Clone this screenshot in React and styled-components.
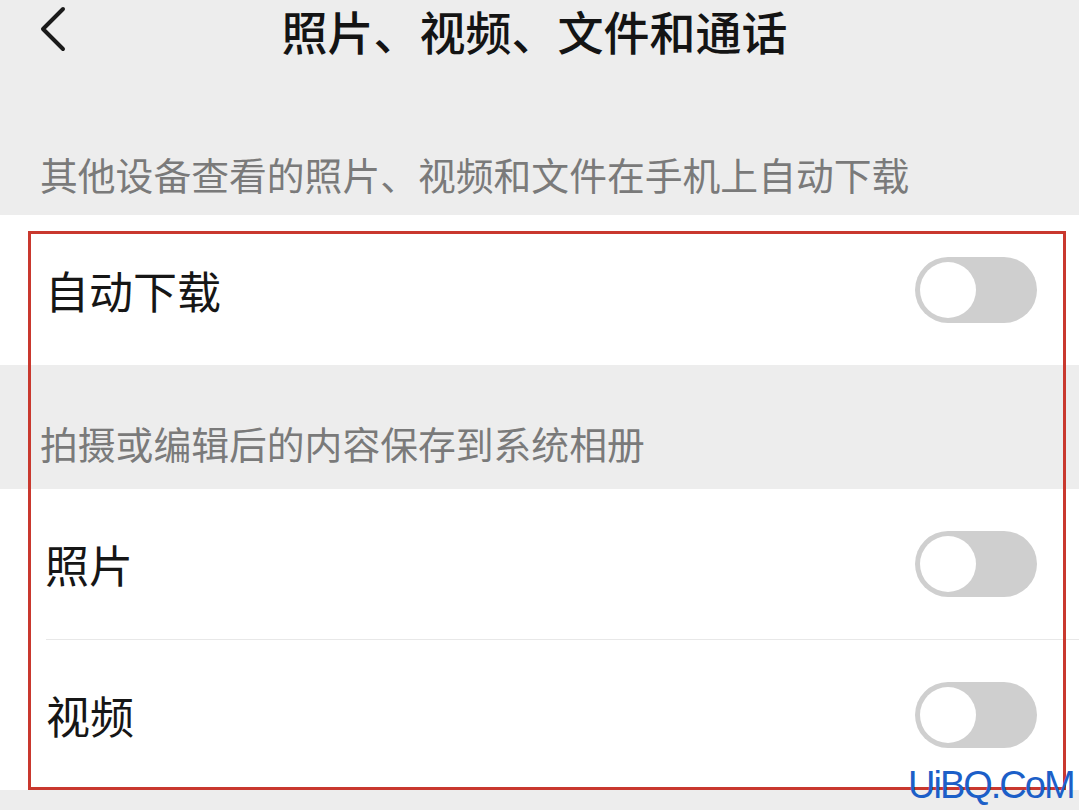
import styled, { createGlobalStyle } from "styled-components";
import { useState } from "react";

const GlobalStyle = createGlobalStyle`
  html, body {
    margin: 0;
    padding: 0;
    background: #ededed;
  }
  body {
    font-family: "Noto Sans CJK SC", "Noto Sans", sans-serif;
  }
`;

function Toggle({ on, onClick }) {
  return (
    <Track $on={on} onClick={onClick}>
      <Knob $on={on} />
    </Track>
  );
}

function Row({ label, on, onToggle, divider }) {
  return (
    <RowWrap $divider={divider}>
      <RowLabel>{label}</RowLabel>
      <Toggle on={on} onClick={onToggle} />
    </RowWrap>
  );
}

export default function App() {
  const [auto, setAuto] = useState(false);
  const [photo, setPhoto] = useState(false);
  const [video, setVideo] = useState(false);

  return (
    <Page>
      <GlobalStyle />
      <Header>
        <BackBtn>
          <svg width="30" height="46" viewBox="0 0 30 46">
            <path d="M25 3 L5 23 L25 43" fill="none" stroke="#1a1a1a" strokeWidth="4" strokeLinecap="round" strokeLinejoin="round" />
          </svg>
        </BackBtn>
        <Title>照片、视频、文件和通话</Title>
        <span />
      </Header>

      <SectionHint $height={155} $bottom={17}>其他设备查看的照片、视频和文件在手机上自动下载</SectionHint>
      <Group>
        <Row label="自动下载" on={auto} onToggle={() => setAuto(!auto)} />
      </Group>

      <SectionHint $height={124} $bottom={22}>拍摄或编辑后的内容保存到系统相册</SectionHint>
      <Group>
        <Row label="照片" on={photo} onToggle={() => setPhoto(!photo)} />
        <Row label="视频" on={video} onToggle={() => setVideo(!video)} divider />
      </Group>

      <Highlight />
      <Watermark>UiBQ.CoM</Watermark>
    </Page>
  );
}

const Page = styled.div`
  position: relative;
  width: 1079px;
  height: 810px;
  overflow: hidden;
  background: #ededed;
  display: flex;
  flex-direction: column;
`;

const Header = styled.header`
  height: 62px;
  margin-bottom: -2px;
  display: grid;
  grid-template-columns: 1fr auto 1fr;
  align-items: start;
`;

const BackBtn = styled.div`
  display: flex;
  padding: 6px 0 0 38px;
`;

const Title = styled.h1`
  margin: 0 10px 0 0;
  font-size: 46px;
  font-weight: 500;
  color: #141414;
  line-height: 60px;
  white-space: nowrap;
`;

const SectionHint = styled.div`
  height: ${({ $height }) => $height}px;
  padding: 0 0 ${({ $bottom }) => $bottom}px 40px;
  box-sizing: border-box;
  display: flex;
  align-items: flex-end;
  font-size: 37.8px;
  line-height: 48px;
  color: #7a7a7a;
  white-space: nowrap;
`;

const Group = styled.div`
  background: #fff;
`;

const RowWrap = styled.div`
  display: flex;
  align-items: center;
  justify-content: space-between;
  height: 150px;
  padding: 0 42px 0 45px;
  ${({ $divider }) =>
    $divider &&
    `
    border-top: 1px solid #e8e8e8;
    margin-left: 46px;
    padding-left: 0;
  `}
`;

const RowLabel = styled.span`
  font-size: 44px;
  color: #161616;
`;

const Track = styled.div`
  width: 122px;
  height: 66px;
  border-radius: 33px;
  background: ${({ $on }) => ($on ? "#07c160" : "#cfcfcf")};
  position: relative;
  cursor: pointer;
  flex-shrink: 0;
`;

const Knob = styled.div`
  position: absolute;
  top: 5px;
  left: ${({ $on }) => ($on ? "61px" : "5px")};
  width: 56px;
  height: 56px;
  border-radius: 50%;
  background: #fff;
`;

const Highlight = styled.div`
  position: absolute;
  left: 28px;
  top: 231px;
  width: 1038px;
  height: 559px;
  border: 3px solid #c9382e;
  box-sizing: border-box;
  pointer-events: none;
`;

const Watermark = styled.div`
  position: absolute;
  left: 908px;
  top: 764px;
  font-family: "Liberation Sans", Arial, sans-serif;
  font-size: 38px;
  color: #1c5fc8;
  letter-spacing: -2px;
  pointer-events: none;
`;
